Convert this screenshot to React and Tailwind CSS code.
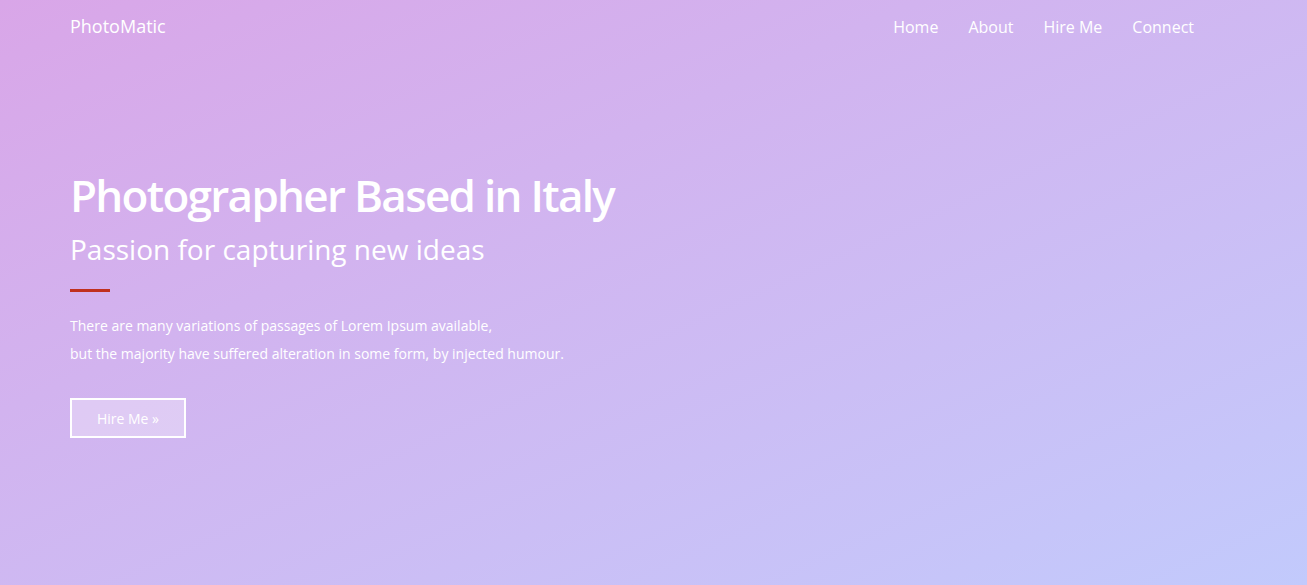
export default function App() {
  return (
    <div className="min-h-[585px] w-full bg-gradient-to-br from-[#d9a6e8] to-[#c2cafc] font-['Open_Sans',sans-serif] text-white">
      <nav className="flex items-center justify-between pl-[70px] pr-[113px] pt-[13px]">
        <a className="text-[18px] leading-[27px]">PhotoMatic</a>
        <ul className="flex gap-[30px] text-[16px] leading-[24px]">
          <li>Home</li>
          <li>About</li>
          <li>Hire Me</li>
          <li>Connect</li>
        </ul>
      </nav>

      <section className="px-[70px] pt-[125px]">
        <h1 className="text-[44px] font-semibold leading-[60px] tracking-[-1.7px]">Photographer Based in Italy</h1>
        <h2 className="mt-[4px] text-[28px] leading-[40px]">Passion for capturing new ideas</h2>
        <div className="mt-[20px] h-[3px] w-[40px] bg-[#c0301e]"></div>
        <p className="mt-[20px] text-[14px] leading-[28px]">
          There are many variations of passages of Lorem Ipsum available,
          <br />
          but the majority have suffered alteration in some form, by injected humour.
        </p>
        <button className="mt-[30px] h-[40px] w-[116px] border-2 border-white bg-white/30 text-[14px]">
          Hire Me »
        </button>
      </section>
    </div>
  );
}
